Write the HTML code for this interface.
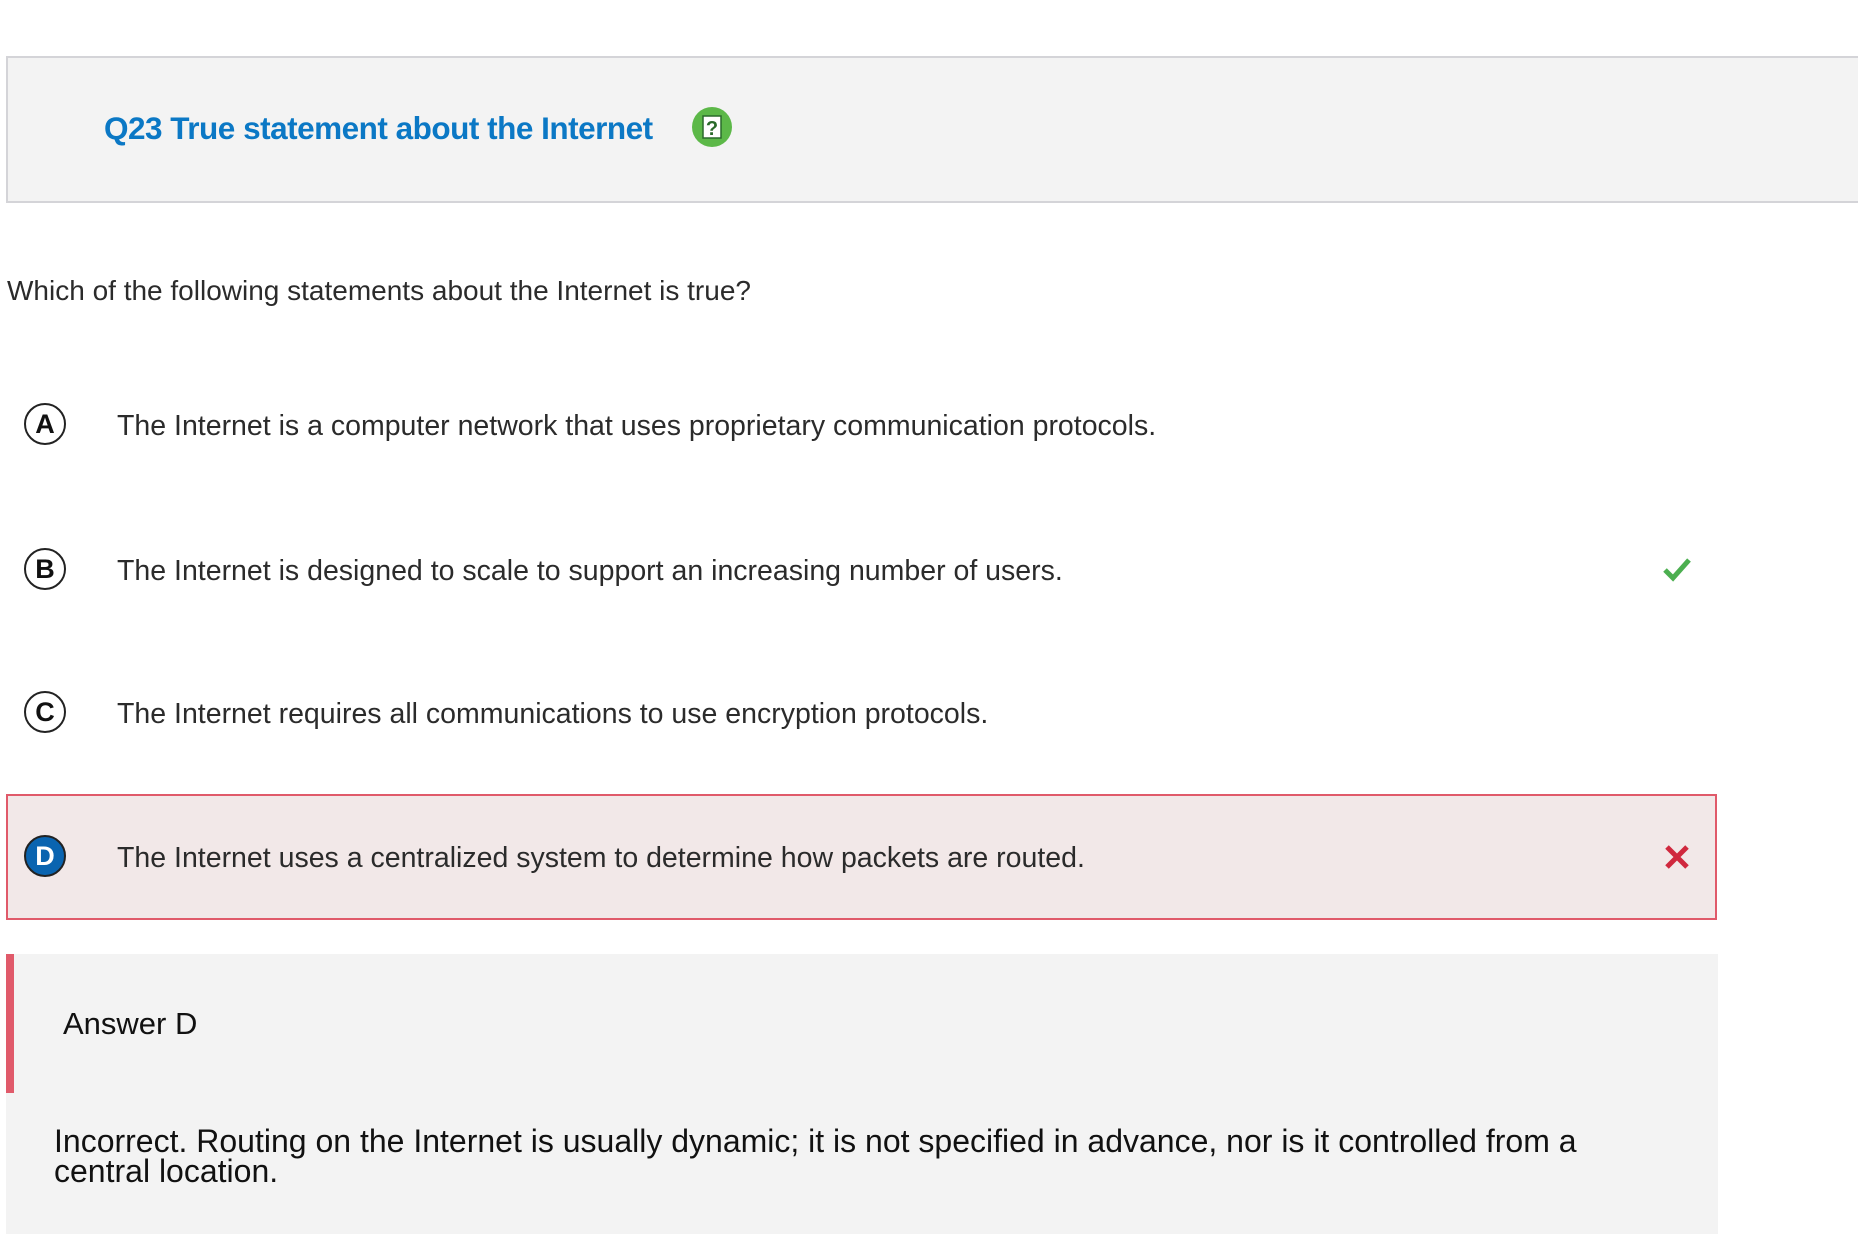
<!DOCTYPE html>
<html><head><style>
body{margin:0;width:1858px;height:1224px;background:#fff;font-family:"Liberation Sans",sans-serif;position:relative;overflow:hidden;color:#2b2b2b}
.abs{position:absolute;white-space:nowrap}
.hdr{position:absolute;left:6px;top:56px;width:1870px;height:143px;background:#f3f3f3;border:2px solid #d4d4d8}
.title{left:104px;top:110px;font-size:31.5px;color:#0b78c5;font-weight:bold;letter-spacing:-0.5px}
.q{left:7px;top:275px;font-size:28px}
.circ{position:absolute;width:38px;height:38px;border:2.5px solid #222;border-radius:50%;font-weight:bold;font-size:27px;text-align:center;line-height:38px;color:#111}
.opt{font-size:28.5px;left:117px}
.dbox{position:absolute;left:6px;top:794px;width:1707px;height:122px;background:#f2e8e8;border:2px solid #e05a6a}
.fb{position:absolute;left:6px;top:954px;width:1712px;height:280px;background:#f3f3f3}
.bar{position:absolute;left:6px;top:954px;width:8px;height:139px;background:#e05a6a}
</style></head><body>
<div class="hdr"></div>
<div class="abs title">Q23 True statement about the Internet</div>
<svg class="abs" style="left:691px;top:106px" width="42" height="42" viewBox="0 0 42 42">
<circle cx="21" cy="21" r="20" fill="#5cb848"/>
<rect x="12" y="10" width="18" height="22" fill="#fff" stroke="#2a6a2a" stroke-width="1.5"/>
<text x="21" y="29" font-size="20" font-weight="bold" text-anchor="middle" fill="#2a6a2a" font-family="Liberation Sans">?</text>
</svg>
<div class="abs q">Which of the following statements about the Internet is true?</div>

<div class="circ" style="left:24px;top:403px">A</div>
<div class="abs opt" style="top:410px">The Internet is a computer network that uses proprietary communication protocols.</div>

<div class="circ" style="left:24px;top:548px">B</div>
<div class="abs opt" style="top:555px">The Internet is designed to scale to support an increasing number of users.</div>
<svg class="abs" style="left:1662px;top:556px" width="30" height="26" viewBox="0 0 30 26"><path d="M3 14 L11 22 L27 4" fill="none" stroke="#4caf50" stroke-width="5"/></svg>

<div class="circ" style="left:24px;top:691px">C</div>
<div class="abs opt" style="top:698px">The Internet requires all communications to use encryption protocols.</div>

<div class="dbox"></div>
<div class="circ" style="left:24px;top:835px;background:#0a64b0;color:#fff;border-color:#222">D</div>
<div class="abs opt" style="top:842px">The Internet uses a centralized system to determine how packets are routed.</div>
<svg class="abs" style="left:1664px;top:844px" width="26" height="26" viewBox="0 0 26 26"><path d="M3 3 L23 23 M23 3 L3 23" stroke="#d0283e" stroke-width="5"/></svg>

<div class="fb"></div>
<div class="bar"></div>
<div class="abs" style="left:63px;top:1006px;font-size:31px;color:#111">Answer D</div>
<div class="abs" style="left:54px;top:1126px;font-size:32px;line-height:30px;color:#111">Incorrect. Routing on the Internet is usually dynamic; it is not specified in advance, nor is it controlled from a<br>central location.</div>
</body></html>
